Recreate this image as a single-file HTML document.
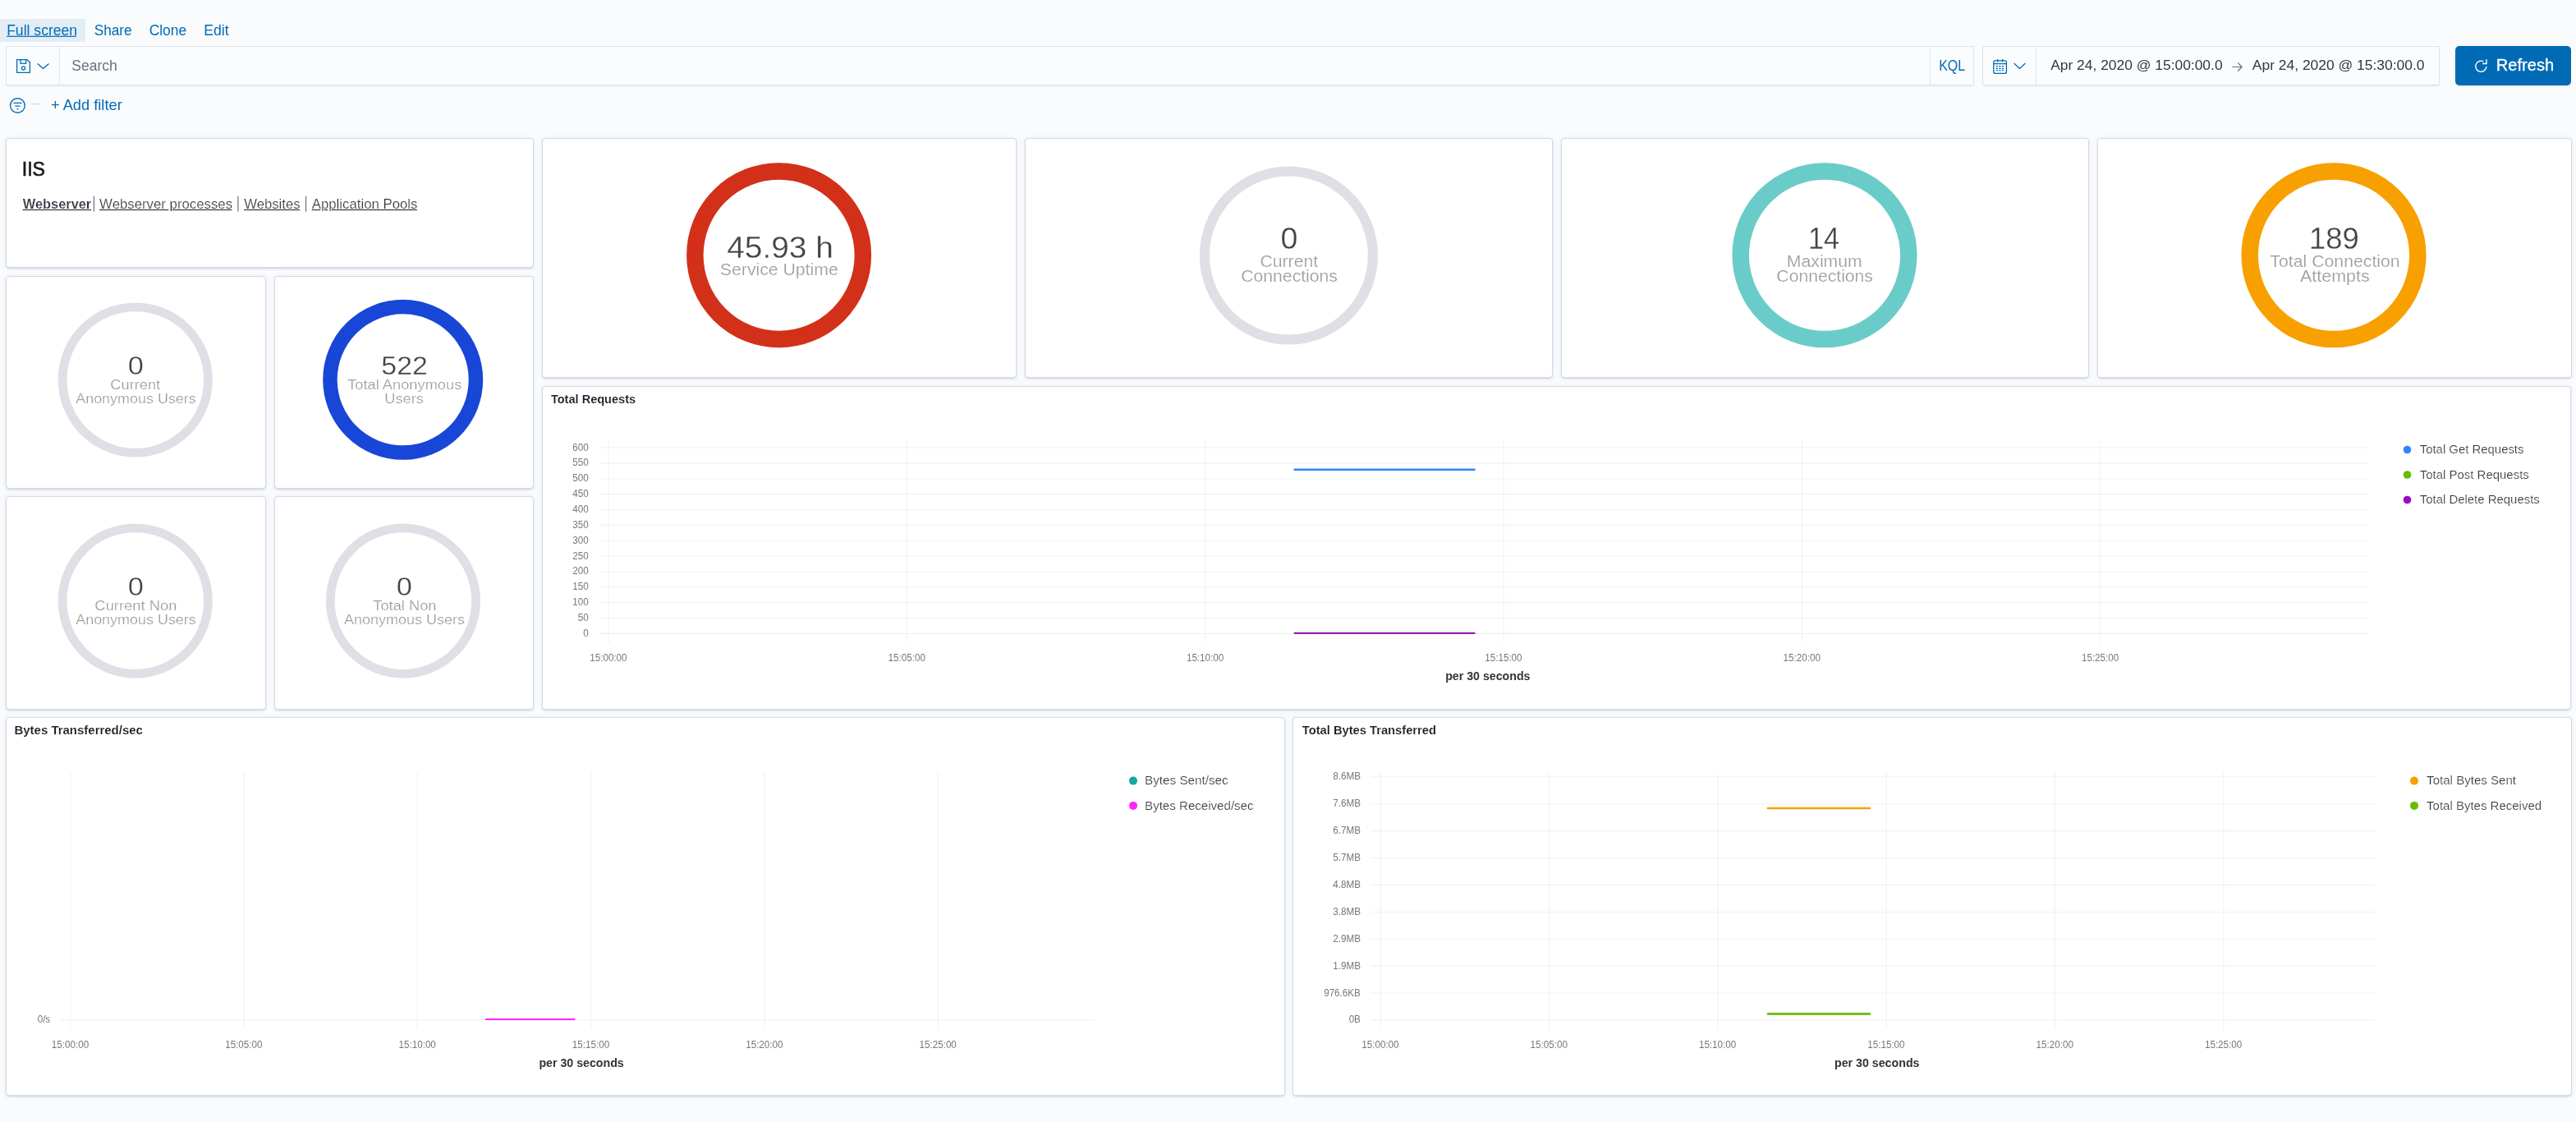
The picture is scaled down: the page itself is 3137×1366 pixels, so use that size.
<!DOCTYPE html>
<html><head><meta charset="utf-8"><style>
html,body{margin:0;padding:0;}
body{width:3137px;height:1366px;background:#fafbfd;position:relative;overflow:hidden;font-family:"Liberation Sans",sans-serif;}
.p{position:absolute;box-sizing:border-box;background:#fff;border:1px solid #d3dae6;border-radius:4px;box-shadow:0 1px 2px rgba(152,162,179,.2),0 3px 3px -2px rgba(152,162,179,.25),0 0 6px rgba(152,162,179,.14);}
.hl{position:absolute;left:0;top:23px;width:104px;height:28px;background:#e2edf6;}
.fld{position:absolute;box-sizing:border-box;background:#fbfcfd;border:1px solid #dde2eb;box-shadow:0 1px 1px -1px rgba(152,162,179,.2),0 3px 2px -2px rgba(152,162,179,.2);}
.div{position:absolute;width:1px;background:#e3e7ee;}
.btn{position:absolute;left:2990px;top:56px;width:141px;height:48px;background:#006bb4;border-radius:5px;box-shadow:0 1px 1px -1px rgba(152,162,179,.3),0 3px 2px -2px rgba(152,162,179,.3);}
svg{position:absolute;left:0;top:0;will-change:transform;}
text{font-family:"Liberation Sans",sans-serif;white-space:pre;}
</style></head><body>
<div class="hl"></div>
<div class="fld" style="left:7px;top:56px;width:2397px;height:48px"></div>
<div class="div" style="left:72px;top:57px;height:46px"></div>
<div class="div" style="left:2350px;top:57px;height:46px"></div>
<div class="fld" style="left:2414px;top:56px;width:557px;height:48px"></div>
<div class="div" style="left:2479px;top:57px;height:46px"></div>
<div class="btn"></div>
<div class="p" style="left:7px;top:168px;width:643px;height:158px"></div><div class="p" style="left:7px;top:336px;width:317px;height:259px"></div><div class="p" style="left:334px;top:336px;width:316px;height:259px"></div><div class="p" style="left:7px;top:604px;width:317px;height:260px"></div><div class="p" style="left:334px;top:604px;width:316px;height:260px"></div><div class="p" style="left:660px;top:168px;width:578px;height:292px"></div><div class="p" style="left:1248px;top:168px;width:643px;height:292px"></div><div class="p" style="left:1901px;top:168px;width:643px;height:292px"></div><div class="p" style="left:2554px;top:168px;width:578px;height:292px"></div><div class="p" style="left:660px;top:470px;width:2471px;height:394px"></div><div class="p" style="left:7px;top:873px;width:1558px;height:461px"></div><div class="p" style="left:1574px;top:873px;width:1558px;height:461px"></div>
<svg width="3137" height="1366" viewBox="0 0 3137 1366">
<g stroke="#000" stroke-opacity="0.055" stroke-width="1.1"><line x1="729.2" y1="545.00" x2="2885.1" y2="545.00"/><line x1="729.2" y1="563.87" x2="2885.1" y2="563.87"/><line x1="729.2" y1="582.73" x2="2885.1" y2="582.73"/><line x1="729.2" y1="601.60" x2="2885.1" y2="601.60"/><line x1="729.2" y1="620.47" x2="2885.1" y2="620.47"/><line x1="729.2" y1="639.33" x2="2885.1" y2="639.33"/><line x1="729.2" y1="658.20" x2="2885.1" y2="658.20"/><line x1="729.2" y1="677.07" x2="2885.1" y2="677.07"/><line x1="729.2" y1="695.93" x2="2885.1" y2="695.93"/><line x1="729.2" y1="714.80" x2="2885.1" y2="714.80"/><line x1="729.2" y1="733.67" x2="2885.1" y2="733.67"/><line x1="729.2" y1="752.53" x2="2885.1" y2="752.53"/><line x1="729.2" y1="771.40" x2="2885.1" y2="771.40"/><line x1="741.10" y1="537" x2="741.10" y2="782.8"/><line x1="1104.44" y1="537" x2="1104.44" y2="782.8"/><line x1="1467.78" y1="537" x2="1467.78" y2="782.8"/><line x1="1831.12" y1="537" x2="1831.12" y2="782.8"/><line x1="2194.46" y1="537" x2="2194.46" y2="782.8"/><line x1="2557.80" y1="537" x2="2557.80" y2="782.8"/><line x1="1669.1" y1="945.80" x2="2892.7" y2="945.80"/><line x1="1669.1" y1="978.70" x2="2892.7" y2="978.70"/><line x1="1669.1" y1="1011.60" x2="2892.7" y2="1011.60"/><line x1="1669.1" y1="1044.50" x2="2892.7" y2="1044.50"/><line x1="1669.1" y1="1077.40" x2="2892.7" y2="1077.40"/><line x1="1669.1" y1="1110.30" x2="2892.7" y2="1110.30"/><line x1="1669.1" y1="1143.20" x2="2892.7" y2="1143.20"/><line x1="1669.1" y1="1176.10" x2="2892.7" y2="1176.10"/><line x1="1669.1" y1="1209.00" x2="2892.7" y2="1209.00"/><line x1="1669.1" y1="1241.90" x2="2892.7" y2="1241.90"/><line x1="1681.10" y1="940.3" x2="1681.10" y2="1253.5"/><line x1="1886.44" y1="940.3" x2="1886.44" y2="1253.5"/><line x1="2091.78" y1="940.3" x2="2091.78" y2="1253.5"/><line x1="2297.12" y1="940.3" x2="2297.12" y2="1253.5"/><line x1="2502.46" y1="940.3" x2="2502.46" y2="1253.5"/><line x1="2707.80" y1="940.3" x2="2707.80" y2="1253.5"/><line x1="73.5" y1="1241.6" x2="1332.7" y2="1241.6"/><line x1="85.70" y1="940.3" x2="85.70" y2="1253.3"/><line x1="297.04" y1="940.3" x2="297.04" y2="1253.3"/><line x1="508.38" y1="940.3" x2="508.38" y2="1253.3"/><line x1="719.72" y1="940.3" x2="719.72" y2="1253.3"/><line x1="931.06" y1="940.3" x2="931.06" y2="1253.3"/><line x1="1142.40" y1="940.3" x2="1142.40" y2="1253.3"/></g>
<circle cx="948.6" cy="310.7" r="102.25" fill="none" stroke="#d3301a" stroke-width="20.5"/><circle cx="1569.4" cy="311" r="102.5" fill="none" stroke="#dfe0e5" stroke-width="12.2"/><circle cx="2222" cy="310.8" r="102.3" fill="none" stroke="#6accc8" stroke-width="20.5"/><circle cx="2842" cy="310.8" r="102.3" fill="none" stroke="#f7a000" stroke-width="20.5"/><circle cx="164.75" cy="462.45" r="88.7" fill="none" stroke="#dfe0e5" stroke-width="10.75"/><circle cx="490.7" cy="462.3" r="88.75" fill="none" stroke="#1846d6" stroke-width="17.5"/><circle cx="164.75" cy="731.55" r="88.7" fill="none" stroke="#dfe0e5" stroke-width="10.75"/><circle cx="490.95" cy="731.55" r="88.7" fill="none" stroke="#dfe0e5" stroke-width="10.75"/>

<g fill="none" stroke-linecap="round">
<line x1="1576.5" y1="571.7" x2="1795.5" y2="571.7" stroke="#3185fc" stroke-width="2.5"/>
<line x1="1576.5" y1="770.9" x2="1795.5" y2="770.9" stroke="#9321a6" stroke-width="2.2"/>
<line x1="591.8" y1="1241" x2="699.6" y2="1241" stroke="#fb26fd" stroke-width="2.2"/>
<line x1="2153" y1="984" x2="2277" y2="984" stroke="#f7a000" stroke-width="2.6"/>
<line x1="2153" y1="1234.4" x2="2277" y2="1234.4" stroke="#68bc00" stroke-width="2.6"/>
</g>
<g>
<circle cx="2931.5" cy="547.5" r="4.8" fill="#3185fc"/>
<circle cx="2931.5" cy="578" r="4.8" fill="#68bc00"/>
<circle cx="2931.5" cy="608.5" r="4.8" fill="#9a0ac6"/>
<circle cx="1380" cy="950.6" r="5" fill="#16a5a0"/>
<circle cx="1380" cy="980.9" r="5" fill="#fb26fd"/>
<circle cx="2940" cy="950.6" r="5" fill="#f7a000"/>
<circle cx="2940" cy="980.9" r="5" fill="#68bc00"/>
</g>


<g fill="#343741">
<rect x="27.4" y="254.9" width="83.7" height="1.2"/>
<rect x="121" y="254.9" width="84.3" height="1.2"/><rect x="209.7" y="254.9" width="72.8" height="1.2"/>
<rect x="297" y="254.9" width="68.3" height="1.2"/>
<rect x="379.7" y="254.9" width="10.6" height="1.2"/><rect x="394.7" y="254.9" width="4.6" height="1.2"/><rect x="403.7" y="254.9" width="104.1" height="1.2"/>
</g>
<g fill="#69707d">
<rect x="113.8" y="238.8" width="1.2" height="18.7"/>
<rect x="289.3" y="238.8" width="1.2" height="18.7"/>
<rect x="371.9" y="238.8" width="1.2" height="18.7"/>
</g>
<rect x="8.1" y="43.7" width="84.8" height="1.2" fill="#006bb4"/>


<g fill="none" stroke="#006bb4" stroke-width="1.3" stroke-linejoin="round">
 <path d="M20.6 72.6 H33 L36.4 76 V88.4 H20.6 Z"/>
 <path d="M25.1 72.6 V77.3 H31.6 V72.6"/>
 <circle cx="28.5" cy="82.9" r="2.1"/>
 <path d="M45.8 77.4 L52.6 83.6 L59.5 77.4"/>
 <path d="M2452.6 77.1 L2459.5 83.4 L2466.4 77.1"/>
 <rect x="2427.8" y="73.8" width="15.6" height="15.6" rx="2"/>
 <path d="M2427.8 77.6 H2443.4"/>
 <path d="M2432.6 71.9 V75.6 M2438.6 71.9 V75.6"/>
 <path d="M2430.7 80.6 H2440.7 M2430.7 83.4 H2440.7 M2430.7 85.6 H2440.7" stroke-dasharray="2.2 1.4" stroke-width="1.1"/>
 <circle cx="21.4" cy="128.5" r="8.8" stroke-width="1.4"/>
 <path d="M16.4 125.4 H26.6 M18.4 129.1 H24.6 M20.5 132.6 H22.5" stroke-width="1.3"/>
</g>
<path d="M37.9 126.6 H50" stroke="#d3dae6" stroke-width="1.2"/>
<g fill="none" stroke="#69707d" stroke-width="1.2">
 <path d="M2718.3 81.5 H2730.2 M2725.2 76.4 L2730.2 81.5 L2725.2 86.5"/>
</g>
<g fill="none" stroke="#ffffff" stroke-width="1.4">
 <path d="M3027.9 81 A6.6 6.6 0 1 1 3024.6 75.0"/>
 <path d="M3028 72.2 V77.5 H3023"/>
</g>

<text x="8.13" y="43.10" font-size="18" font-weight="400" fill="#006bb4" textLength="86.02" lengthAdjust="spacingAndGlyphs">Full screen</text><text x="114.68" y="43.10" font-size="18" font-weight="400" fill="#006bb4" textLength="45.97" lengthAdjust="spacingAndGlyphs">Share</text><text x="181.63" y="43.10" font-size="18" font-weight="400" fill="#006bb4" textLength="45.63" lengthAdjust="spacingAndGlyphs">Clone</text><text x="248.23" y="43.10" font-size="18" font-weight="400" fill="#006bb4" textLength="30.39" lengthAdjust="spacingAndGlyphs">Edit</text><text x="87.25" y="85.90" font-size="17.6" font-weight="400" fill="#69707d" textLength="55.55" lengthAdjust="spacingAndGlyphs">Search</text><text x="2361.16" y="86.00" font-size="18" font-weight="400" fill="#006bb4" textLength="32.10" lengthAdjust="spacingAndGlyphs">KQL</text><text x="2497.20" y="84.90" font-size="17.1" font-weight="400" fill="#343741" textLength="209.39" lengthAdjust="spacingAndGlyphs">Apr 24, 2020 @ 15:00:00.0</text><text x="2742.80" y="84.90" font-size="17.1" font-weight="400" fill="#343741" textLength="209.79" lengthAdjust="spacingAndGlyphs">Apr 24, 2020 @ 15:30:00.0</text><text x="3039.86" y="86.10" font-size="19.5" font-weight="400" fill="#ffffff" textLength="70.26" lengthAdjust="spacingAndGlyphs" stroke="#ffffff" stroke-width="0.3">Refresh</text><text x="61.93" y="134.00" font-size="17.7" font-weight="400" fill="#006bb4" textLength="86.80" lengthAdjust="spacingAndGlyphs">+ Add filter</text><text x="26.78" y="214.10" font-size="24.5" font-weight="400" fill="#1a1c22" textLength="28.26" lengthAdjust="spacingAndGlyphs" stroke="#1a1c22" stroke-width="0.7">IIS</text><text x="27.80" y="254.00" font-size="17" font-weight="700" fill="#343741" textLength="83.42" lengthAdjust="spacingAndGlyphs" stroke="#ffffff" stroke-width="0.2">Webserver</text><text x="121.10" y="254.00" font-size="17" font-weight="400" fill="#343741" textLength="161.97" lengthAdjust="spacingAndGlyphs" stroke="#ffffff" stroke-width="0.2">Webserver processes</text><text x="297.20" y="254.00" font-size="17" font-weight="400" fill="#343741" textLength="68.39" lengthAdjust="spacingAndGlyphs" stroke="#ffffff" stroke-width="0.2">Websites</text><text x="379.70" y="254.00" font-size="17" font-weight="400" fill="#343741" textLength="128.76" lengthAdjust="spacingAndGlyphs" stroke="#ffffff" stroke-width="0.2">Application Pools</text><text x="885.21" y="314.00" font-size="37" font-weight="400" fill="#444444" textLength="129.66" lengthAdjust="spacingAndGlyphs" stroke="#ffffff" stroke-width="0.3">45.93 h</text><text x="876.86" y="334.80" font-size="20.5" font-weight="400" fill="#9c9c9c" textLength="143.86" lengthAdjust="spacingAndGlyphs" stroke="#ffffff" stroke-width="0.2">Service Uptime</text><text x="1559.48" y="302.70" font-size="37" font-weight="400" fill="#444444" textLength="20.87" lengthAdjust="spacingAndGlyphs" stroke="#ffffff" stroke-width="0.3">0</text><text x="1534.47" y="324.90" font-size="20.5" font-weight="400" fill="#9c9c9c" textLength="70.65" lengthAdjust="spacingAndGlyphs" stroke="#ffffff" stroke-width="0.2">Current</text><text x="1511.27" y="342.90" font-size="20.5" font-weight="400" fill="#9c9c9c" textLength="117.67" lengthAdjust="spacingAndGlyphs" stroke="#ffffff" stroke-width="0.2">Connections</text><text x="2201.95" y="302.90" font-size="37" font-weight="400" fill="#444444" textLength="38.12" lengthAdjust="spacingAndGlyphs" stroke="#ffffff" stroke-width="0.3">14</text><text x="2175.89" y="324.80" font-size="20.5" font-weight="400" fill="#9c9c9c" textLength="91.79" lengthAdjust="spacingAndGlyphs" stroke="#ffffff" stroke-width="0.2">Maximum</text><text x="2163.37" y="342.70" font-size="20.5" font-weight="400" fill="#9c9c9c" textLength="117.57" lengthAdjust="spacingAndGlyphs" stroke="#ffffff" stroke-width="0.2">Connections</text><text x="2812.09" y="302.90" font-size="37" font-weight="400" fill="#444444" textLength="60.82" lengthAdjust="spacingAndGlyphs" stroke="#ffffff" stroke-width="0.3">189</text><text x="2764.38" y="324.80" font-size="20.5" font-weight="400" fill="#9c9c9c" textLength="158.27" lengthAdjust="spacingAndGlyphs" stroke="#ffffff" stroke-width="0.2">Total Connection</text><text x="2800.90" y="342.70" font-size="20.5" font-weight="400" fill="#9c9c9c" textLength="84.87" lengthAdjust="spacingAndGlyphs" stroke="#ffffff" stroke-width="0.2">Attempts</text><text x="155.66" y="455.50" font-size="32" font-weight="400" fill="#444444" textLength="19.14" lengthAdjust="spacingAndGlyphs" stroke="#ffffff" stroke-width="0.3">0</text><text x="134.37" y="473.80" font-size="16.5" font-weight="400" fill="#9c9c9c" textLength="60.75" lengthAdjust="spacingAndGlyphs" stroke="#ffffff" stroke-width="0.2">Current</text><text x="92.20" y="490.60" font-size="16.5" font-weight="400" fill="#9c9c9c" textLength="146.60" lengthAdjust="spacingAndGlyphs" stroke="#ffffff" stroke-width="0.2">Anonymous Users</text><text x="464.38" y="455.60" font-size="32" font-weight="400" fill="#444444" textLength="56.35" lengthAdjust="spacingAndGlyphs" stroke="#ffffff" stroke-width="0.3">522</text><text x="423.22" y="473.60" font-size="16.5" font-weight="400" fill="#9c9c9c" textLength="139.11" lengthAdjust="spacingAndGlyphs" stroke="#ffffff" stroke-width="0.2">Total Anonymous</text><text x="468.22" y="490.60" font-size="16.5" font-weight="400" fill="#9c9c9c" textLength="47.74" lengthAdjust="spacingAndGlyphs" stroke="#ffffff" stroke-width="0.2">Users</text><text x="155.66" y="724.80" font-size="32" font-weight="400" fill="#444444" textLength="19.14" lengthAdjust="spacingAndGlyphs" stroke="#ffffff" stroke-width="0.3">0</text><text x="115.36" y="743.00" font-size="16.5" font-weight="400" fill="#9c9c9c" textLength="100.19" lengthAdjust="spacingAndGlyphs" stroke="#ffffff" stroke-width="0.2">Current Non</text><text x="92.20" y="759.70" font-size="16.5" font-weight="400" fill="#9c9c9c" textLength="146.60" lengthAdjust="spacingAndGlyphs" stroke="#ffffff" stroke-width="0.2">Anonymous Users</text><text x="482.66" y="724.80" font-size="32" font-weight="400" fill="#444444" textLength="19.14" lengthAdjust="spacingAndGlyphs" stroke="#ffffff" stroke-width="0.3">0</text><text x="454.32" y="742.90" font-size="16.5" font-weight="400" fill="#9c9c9c" textLength="77.14" lengthAdjust="spacingAndGlyphs" stroke="#ffffff" stroke-width="0.2">Total Non</text><text x="419.00" y="759.70" font-size="16.5" font-weight="400" fill="#9c9c9c" textLength="147.00" lengthAdjust="spacingAndGlyphs" stroke="#ffffff" stroke-width="0.2">Anonymous Users</text><text x="670.95" y="491.00" font-size="14.3" font-weight="700" fill="#1a1c21" textLength="103.14" lengthAdjust="spacingAndGlyphs" stroke="#ffffff" stroke-width="0.12">Total Requests</text><text x="17.45" y="893.90" font-size="14.3" font-weight="700" fill="#1a1c21" textLength="156.47" lengthAdjust="spacingAndGlyphs" stroke="#ffffff" stroke-width="0.12">Bytes Transferred/sec</text><text x="1585.84" y="893.90" font-size="14.3" font-weight="700" fill="#1a1c21" textLength="163.07" lengthAdjust="spacingAndGlyphs" stroke="#ffffff" stroke-width="0.12">Total Bytes Transferred</text><text x="1760.14" y="827.70" font-size="14.8" font-weight="700" fill="#333333" textLength="103.33" lengthAdjust="spacingAndGlyphs">per 30 seconds</text><text x="656.44" y="1298.80" font-size="14.8" font-weight="700" fill="#333333" textLength="103.33" lengthAdjust="spacingAndGlyphs">per 30 seconds</text><text x="2234.04" y="1298.80" font-size="14.8" font-weight="700" fill="#333333" textLength="103.43" lengthAdjust="spacingAndGlyphs">per 30 seconds</text><text x="2946.74" y="551.80" font-size="14.4" font-weight="400" fill="#343741" textLength="126.73" lengthAdjust="spacingAndGlyphs" stroke="#ffffff" stroke-width="0.2">Total Get Requests</text><text x="2946.74" y="583.00" font-size="14.4" font-weight="400" fill="#343741" textLength="133.04" lengthAdjust="spacingAndGlyphs" stroke="#ffffff" stroke-width="0.2">Total Post Requests</text><text x="2946.74" y="612.80" font-size="14.4" font-weight="400" fill="#343741" textLength="146.04" lengthAdjust="spacingAndGlyphs" stroke="#ffffff" stroke-width="0.2">Total Delete Requests</text><text x="1394.08" y="954.80" font-size="14.4" font-weight="400" fill="#343741" textLength="101.59" lengthAdjust="spacingAndGlyphs" stroke="#ffffff" stroke-width="0.2">Bytes Sent/sec</text><text x="1394.09" y="985.80" font-size="14.4" font-weight="400" fill="#343741" textLength="132.48" lengthAdjust="spacingAndGlyphs" stroke="#ffffff" stroke-width="0.2">Bytes Received/sec</text><text x="2955.14" y="954.80" font-size="14.4" font-weight="400" fill="#343741" textLength="108.91" lengthAdjust="spacingAndGlyphs" stroke="#ffffff" stroke-width="0.2">Total Bytes Sent</text><text x="2955.14" y="985.80" font-size="14.4" font-weight="400" fill="#343741" textLength="139.95" lengthAdjust="spacingAndGlyphs" stroke="#ffffff" stroke-width="0.2">Total Bytes Received</text><text x="697.19" y="548.50" font-size="12.8" fill="#777777" textLength="19.43" lengthAdjust="spacingAndGlyphs">600</text><text x="697.19" y="567.37" font-size="12.8" fill="#777777" textLength="19.43" lengthAdjust="spacingAndGlyphs">550</text><text x="697.19" y="586.23" font-size="12.8" fill="#777777" textLength="19.43" lengthAdjust="spacingAndGlyphs">500</text><text x="697.19" y="605.10" font-size="12.8" fill="#777777" textLength="19.43" lengthAdjust="spacingAndGlyphs">450</text><text x="697.19" y="623.97" font-size="12.8" fill="#777777" textLength="19.43" lengthAdjust="spacingAndGlyphs">400</text><text x="697.19" y="642.83" font-size="12.8" fill="#777777" textLength="19.43" lengthAdjust="spacingAndGlyphs">350</text><text x="697.19" y="661.70" font-size="12.8" fill="#777777" textLength="19.43" lengthAdjust="spacingAndGlyphs">300</text><text x="697.19" y="680.57" font-size="12.8" fill="#777777" textLength="19.43" lengthAdjust="spacingAndGlyphs">250</text><text x="697.19" y="699.43" font-size="12.8" fill="#777777" textLength="19.43" lengthAdjust="spacingAndGlyphs">200</text><text x="697.19" y="718.30" font-size="12.8" fill="#777777" textLength="19.43" lengthAdjust="spacingAndGlyphs">150</text><text x="697.19" y="737.17" font-size="12.8" fill="#777777" textLength="19.43" lengthAdjust="spacingAndGlyphs">100</text><text x="703.79" y="756.03" font-size="12.8" fill="#777777" textLength="12.95" lengthAdjust="spacingAndGlyphs">50</text><text x="710.16" y="774.90" font-size="12.8" fill="#777777" textLength="6.48" lengthAdjust="spacingAndGlyphs">0</text><text x="718.24" y="805.20" font-size="12.8" fill="#777777" textLength="45.33" lengthAdjust="spacingAndGlyphs">15:00:00</text><text x="1081.58" y="805.20" font-size="12.8" fill="#777777" textLength="45.33" lengthAdjust="spacingAndGlyphs">15:05:00</text><text x="1444.92" y="805.20" font-size="12.8" fill="#777777" textLength="45.33" lengthAdjust="spacingAndGlyphs">15:10:00</text><text x="1808.26" y="805.20" font-size="12.8" fill="#777777" textLength="45.33" lengthAdjust="spacingAndGlyphs">15:15:00</text><text x="2171.60" y="805.20" font-size="12.8" fill="#777777" textLength="45.33" lengthAdjust="spacingAndGlyphs">15:20:00</text><text x="2534.94" y="805.20" font-size="12.8" fill="#777777" textLength="45.33" lengthAdjust="spacingAndGlyphs">15:25:00</text><text x="1623.31" y="949.30" font-size="12.8" fill="#777777" textLength="33.66" lengthAdjust="spacingAndGlyphs">8.6MB</text><text x="1623.31" y="982.20" font-size="12.8" fill="#777777" textLength="33.66" lengthAdjust="spacingAndGlyphs">7.6MB</text><text x="1623.31" y="1015.10" font-size="12.8" fill="#777777" textLength="33.66" lengthAdjust="spacingAndGlyphs">6.7MB</text><text x="1623.31" y="1048.00" font-size="12.8" fill="#777777" textLength="33.66" lengthAdjust="spacingAndGlyphs">5.7MB</text><text x="1623.31" y="1080.90" font-size="12.8" fill="#777777" textLength="33.66" lengthAdjust="spacingAndGlyphs">4.8MB</text><text x="1623.31" y="1113.80" font-size="12.8" fill="#777777" textLength="33.66" lengthAdjust="spacingAndGlyphs">3.8MB</text><text x="1623.31" y="1146.70" font-size="12.8" fill="#777777" textLength="33.66" lengthAdjust="spacingAndGlyphs">2.9MB</text><text x="1623.31" y="1179.60" font-size="12.8" fill="#777777" textLength="33.66" lengthAdjust="spacingAndGlyphs">1.9MB</text><text x="1612.16" y="1212.50" font-size="12.8" fill="#777777" textLength="44.68" lengthAdjust="spacingAndGlyphs">976.6KB</text><text x="1642.65" y="1245.40" font-size="12.8" fill="#777777" textLength="14.25" lengthAdjust="spacingAndGlyphs">0B</text><text x="1658.24" y="1276.00" font-size="12.8" fill="#777777" textLength="45.33" lengthAdjust="spacingAndGlyphs">15:00:00</text><text x="1863.58" y="1276.00" font-size="12.8" fill="#777777" textLength="45.33" lengthAdjust="spacingAndGlyphs">15:05:00</text><text x="2068.92" y="1276.00" font-size="12.8" fill="#777777" textLength="45.33" lengthAdjust="spacingAndGlyphs">15:10:00</text><text x="2274.26" y="1276.00" font-size="12.8" fill="#777777" textLength="45.33" lengthAdjust="spacingAndGlyphs">15:15:00</text><text x="2479.60" y="1276.00" font-size="12.8" fill="#777777" textLength="45.33" lengthAdjust="spacingAndGlyphs">15:20:00</text><text x="2684.94" y="1276.00" font-size="12.8" fill="#777777" textLength="45.33" lengthAdjust="spacingAndGlyphs">15:25:00</text><text x="62.84" y="1276.00" font-size="12.8" fill="#777777" textLength="45.33" lengthAdjust="spacingAndGlyphs">15:00:00</text><text x="274.18" y="1276.00" font-size="12.8" fill="#777777" textLength="45.33" lengthAdjust="spacingAndGlyphs">15:05:00</text><text x="485.52" y="1276.00" font-size="12.8" fill="#777777" textLength="45.33" lengthAdjust="spacingAndGlyphs">15:10:00</text><text x="696.86" y="1276.00" font-size="12.8" fill="#777777" textLength="45.33" lengthAdjust="spacingAndGlyphs">15:15:00</text><text x="908.20" y="1276.00" font-size="12.8" fill="#777777" textLength="45.33" lengthAdjust="spacingAndGlyphs">15:20:00</text><text x="1119.54" y="1276.00" font-size="12.8" fill="#777777" textLength="45.33" lengthAdjust="spacingAndGlyphs">15:25:00</text><text x="45.66" y="1245.10" font-size="12.8" fill="#777777" textLength="15.54" lengthAdjust="spacingAndGlyphs">0/s</text>
</svg>
</body></html>
